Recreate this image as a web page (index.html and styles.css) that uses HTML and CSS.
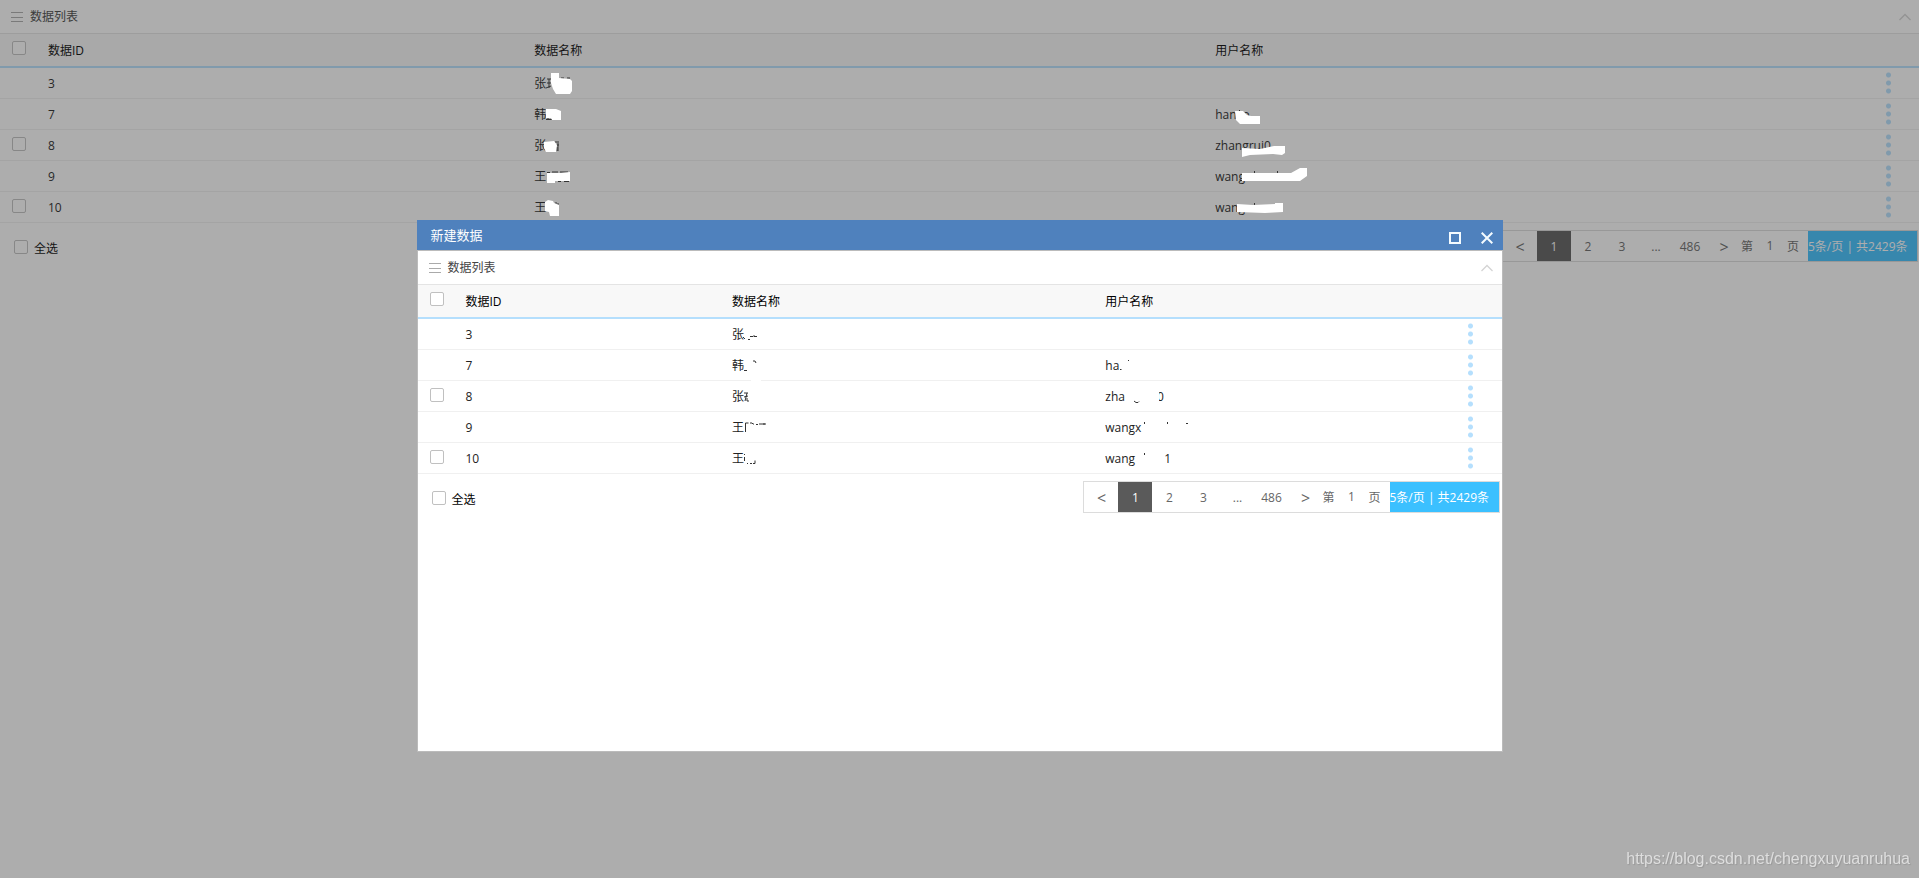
FILE: index.html
```html
<!DOCTYPE html>
<html lang="zh-CN">
<head>
<meta charset="utf-8">
<title>数据列表</title>
<link rel="stylesheet" href="styles.css">
</head>
<body>
<main class="panel">
  <header class="panel-head">
    <svg class="ico" viewBox="0 0 12 12"><path d="M0 1.5h12M0 6.5h12M0 10.5h12" stroke="#aaa"/></svg>
    <h2 class="panel-title">数据列表</h2>
    <button class="fold" type="button" aria-label="收起"><svg class="ico" viewBox="0 0 12 12"><path d="M.5 9 6 3.500 11.500 9" fill="none" stroke="#d4d4d4" stroke-width="1.300"/></svg></button>
  </header>
  <table class="grid">
    <thead>
      <tr><th class="pick"><input type="checkbox" aria-label="选择全部"></th><th>数据ID</th><th>数据名称</th><th>用户名称</th><th class="more"></th></tr>
    </thead>
    <tbody>
      <tr><td class="pick"></td><td>3</td><td>张<svg class="mark" viewBox="0 0 110 31"><path class="ink" d="M23 11h4M23 15h4M25 11v9M22 20l5-2M37 10h3M43 10h3"/><path class="paint" d="M27 5h8v5l11 1 2 2v10l-2 3H32l-3-5-2-6z"/></svg></td><td></td><td class="more"><button class="dots" type="button" aria-label="更多"></button></td></tr>
      <tr><td class="pick"></td><td>7</td><td>韩<svg class="mark" viewBox="0 0 110 31"><path class="ink" d="M22 20.500h6M24 19v1"/><path class="paint" d="M22 10h10l5 2v9h-9l-1-2h-5z"/></svg></td><td>han<span class="tail">o</span><svg class="mark" viewBox="0 0 110 31"><path class="ink" d="M34.500 11v4"/><path class="paint" d="M30 12h8l4 4 4 1h9v8H35l-4-4z"/></svg></td><td class="more"><button class="dots" type="button" aria-label="更多"></button></td></tr>
      <tr><td class="pick"><input type="checkbox" aria-label="选择 8"></td><td>8</td><td>张<svg class="mark" viewBox="0 0 110 31"><path class="ink" d="M31 12h4M32 15h3M33 17v4M34 13v8"/><path class="paint" d="M20 12l10-1 3 4-1 7H22l-2-4z"/></svg></td><td>zhangrui0<svg class="mark" viewBox="0 0 110 31"><path class="paint" d="M37 18l18 1 14-3h11v7l-3 2-9-1-23 1-8 2z"/></svg></td><td class="more"><button class="dots" type="button" aria-label="更多"></button></td></tr>
      <tr><td class="pick"></td><td>9</td><td>王<svg class="mark" viewBox="0 0 110 31"><path class="ink" d="M23 11.500h3M28 11h6M36 11h8M34 20.500h3M40 20.500h5"/><path class="paint" d="M23 12h14l9-1v9H31v2h-8z"/></svg></td><td>wang<svg class="mark" viewBox="0 0 110 31"><path class="ink" d="M49.500 10v3M72.500 10v3"/><path class="paint" d="M37 12h49l9-5h7v8l-7 5H37z"/></svg></td><td class="more"><button class="dots" type="button" aria-label="更多"></button></td></tr>
      <tr><td class="pick"><input type="checkbox" aria-label="选择 10"></td><td>10</td><td>王<svg class="mark" viewBox="0 0 110 31"><path class="ink" d="M32 10v3M34 11v3"/><path class="paint" d="M21 10l3-2 5 1 1 2 5 2v11h-9l-1-4-4-1z"/></svg></td><td>wang<svg class="mark" viewBox="0 0 110 31"><path class="ink" d="M49.500 11v3"/><path class="paint" d="M32 12l16 1 22-1v-1h8v9l-18 1-28-1z"/></svg></td><td class="more"><button class="dots" type="button" aria-label="更多"></button></td></tr>
    </tbody>
  </table>
  <footer class="foot">
    <label class="all"><input type="checkbox">全选</label>
    <nav class="pager">
      <button class="pg arrow" type="button">&lt;</button><button class="pg on" type="button">1</button><button class="pg" type="button">2</button><button class="pg" type="button">3</button><span class="pg">...</span><button class="pg" type="button">486</button><button class="pg arrow" type="button">&gt;</button>
      <label class="jump">第<input class="num" type="text" value="1">页</label>
      <span class="total">5条/页 | 共2429条</span>
    </nav>
  </footer>
</main>

<div class="shade"></div>

<section class="modal" role="dialog" aria-labelledby="dlg">
  <header class="modal-head">
    <h1 class="modal-title" id="dlg">新建数据</h1>
    <button type="button" aria-label="最大化"><svg class="ico" viewBox="0 0 12 12"><path d="M1 1h10v10H1z" fill="none" stroke="#f4fbff" stroke-width="2"/></svg></button>
    <button type="button" aria-label="关闭"><svg class="ico" viewBox="0 0 12 12"><path d="M.7.7l10.600 10.600M11.300.7.7 11.300" stroke="#f4fbff" stroke-width="2"/></svg></button>
  </header>
  <div class="modal-body">
    <header class="panel-head">
      <svg class="ico" viewBox="0 0 12 12"><path d="M0 1.5h12M0 6.5h12M0 10.5h12" stroke="#aaa"/></svg>
      <h2 class="panel-title">数据列表</h2>
      <button class="fold" type="button" aria-label="收起"><svg class="ico" viewBox="0 0 12 12"><path d="M.5 9 6 3.500 11.500 9" fill="none" stroke="#d4d4d4" stroke-width="1.300"/></svg></button>
    </header>
    <table class="grid">
      <thead>
        <tr><th class="pick"><input type="checkbox" aria-label="选择全部"></th><th>数据ID</th><th>数据名称</th><th>用户名称</th><th class="more"></th></tr>
      </thead>
      <tbody>
        <tr><td class="pick"></td><td>3</td><td>张<svg class="mark" viewBox="0 0 110 31"><path class="ink" d="M21 18l2 2M26 20.500h2M28 17.500h3l1-1v1h3"/></svg></td><td></td><td class="more"><button class="dots" type="button" aria-label="更多"></button></td></tr>
        <tr><td class="pick"></td><td>7</td><td>韩<svg class="mark" viewBox="0 0 110 31"><path class="ink" d="M22 20.500h3M31 11h2l1 2"/><path class="paint" d="M29 28h10v4H29z"/></svg></td><td>ha<svg class="mark" viewBox="0 0 110 31"><path class="ink" d="M25 19.500h1.500M33.500 10v1"/></svg></td><td class="more"><button class="dots" type="button" aria-label="更多"></button></td></tr>
        <tr><td class="pick"><input type="checkbox" aria-label="选择 8"></td><td>8</td><td>张<svg class="mark" viewBox="0 0 110 31"><path class="ink" d="M22 12h4M22 16l4-1M25 12l-2 8M25 17v3h2"/></svg></td><td>zha<span class="far">0</span><svg class="mark" viewBox="0 0 110 31"><path class="paint" d="M58 8h6v16h-6z"/><path class="ink" d="M39 20l2 1.500h2l1-1"/></svg></td><td class="more"><button class="dots" type="button" aria-label="更多"></button></td></tr>
        <tr><td class="pick"></td><td>9</td><td>王<svg class="mark" viewBox="0 0 110 31"><path class="ink" d="M23.500 20v-9h3M28 11h2l1 1h1M34 12.500h2M37 12h3M40 12h4M42 11v2"/></svg></td><td>wangx<svg class="mark" viewBox="0 0 110 31"><path class="ink" d="M49.500 10v2M72.500 10v2M91 11.500h2"/></svg></td><td class="more"><button class="dots" type="button" aria-label="更多"></button></td></tr>
        <tr><td class="pick"><input type="checkbox" aria-label="选择 10"></td><td>10</td><td>王<svg class="mark" viewBox="0 0 110 31"><path class="ink" d="M22.500 11v1M22.500 14v4M25 20.500h1M28 20.500h2M31 20.500h2v-3"/></svg></td><td>wang<span class="far one">1</span><svg class="mark" viewBox="0 0 110 31"><path class="ink" d="M49.500 10v2"/></svg></td><td class="more"><button class="dots" type="button" aria-label="更多"></button></td></tr>
      </tbody>
    </table>
    <footer class="foot">
      <label class="all"><input type="checkbox">全选</label>
      <nav class="pager">
        <button class="pg arrow" type="button">&lt;</button><button class="pg on" type="button">1</button><button class="pg" type="button">2</button><button class="pg" type="button">3</button><span class="pg">...</span><button class="pg" type="button">486</button><button class="pg arrow" type="button">&gt;</button>
        <label class="jump">第<input class="num" type="text" value="1">页</label>
        <span class="total">5条/页 | 共2429条</span>
      </nav>
    </footer>
  </div>
</section>

<p class="credit">https://blog.csdn.net/chengxuyuanruhua</p>
</body>
</html>
```
FILE: styles.css
```css
* { box-sizing: border-box; }

body {
  margin: 0;
  background: #fff;
  color: #222;
  font: 12px/18px "Open Sans", "Noto Sans CJK SC", sans-serif;
}

button, input {
  margin: 0;
  padding: 0;
  border: 0;
  background: none;
  color: inherit;
  font: inherit;
}

h1, h2, p { margin: 0; font-weight: normal; }

.ico { display: block; width: 12px; height: 12px; }

input[type="checkbox"] {
  appearance: none;
  display: block;
  width: 14px;
  height: 14px;
  border: 1px solid #c0c0c0;
  border-radius: 2px;
  background: #fff;
}

.panel-head {
  display: flex;
  align-items: center;
  gap: 7px;
  height: 34px;
  padding: 0 8px 0 11px;
  border-bottom: 1px solid #e4e4e4;
}
.panel-title { flex: 1; font-size: 12px; color: #444; }

.grid { display: block; width: 100%; }
.grid thead, .grid tbody { display: block; }
.grid tr {
  display: grid;
  grid-template-columns: 38px 5fr 7fr 7fr 33px;
  height: 31px;
  border-bottom: 1px solid #f0f0f0;
}
.grid thead tr {
  height: 34px;
  background: #f8f8f8;
  border-bottom: 2px solid #b5dffd;
  color: #000;
}
.grid th, .grid td {
  position: relative;
  display: flex;
  align-items: center;
  padding: 2px 10px 0;
  font-weight: normal;
  white-space: nowrap;
}
.grid .pick { align-items: flex-start; padding: 7px 12px; }
.grid .more { padding: 0; }

.dots {
  width: 5px;
  height: 24px;
  background: radial-gradient(circle, #b5dffd 2px, transparent 3px) 0 0 / 5px 8px;
}

.mark {
  position: absolute;
  left: 0;
  top: 0;
  z-index: 2;
  width: 110px;
  height: 31px;
  overflow: visible;
}
.ink { fill: none; stroke: #333; }
.paint { fill: #fff; }
.tail { padding-left: 6px; }
.far { padding-left: 32px; }
.one { padding-left: 29px; }

.foot {
  display: flex;
  justify-content: space-between;
  align-items: flex-start;
  padding: 7px 1px 0 14px;
}
.all { display: flex; align-items: center; gap: 6px; padding-top: 10px; color: #000; }
.all input { margin-bottom: 4px; }

.pager {
  display: flex;
  height: 32px;
  border: 1px solid #dcdcdc;
  color: #666;
  line-height: 32px;
}
.pg { width: 34px; text-align: center; }
.pg.on { background: #5a5a5a; color: #fff; }
.pg.arrow { font-size: 16px; }
.jump { display: flex; padding-right: 9px; }
.num { width: 34px; text-align: center; }
.total { width: 109px; background: #3bc0ff; color: #fff; white-space: nowrap; }

.shade { position: fixed; inset: 0; z-index: 1; background: rgba(50, 50, 50, .4); }

.modal {
  position: fixed;
  top: 220px;
  left: 50%;
  z-index: 3;
  width: 1086px;
  margin-left: -543px;
}
.modal .panel-head { padding-right: 9px; }
.modal .foot { padding-right: 2px; }
.modal-head {
  display: flex;
  align-items: center;
  gap: 20px;
  height: 30px;
  padding: 0 10px 0 14px;
  background: #4f81bd;
  color: #fff;
}
.modal-head button { padding-top: 6px; }
.modal-title { flex: 1; font-size: 13px; }
.modal-body {
  min-height: 502px;
  border: 1px solid #bbb;
  background: #fff;
}

.credit {
  position: fixed;
  right: 9px;
  bottom: 10px;
  z-index: 4;
  color: #dedede;
  font: 16px/18px "Liberation Sans", sans-serif;
  text-shadow: 1px 1px 1px #999;
}
```
